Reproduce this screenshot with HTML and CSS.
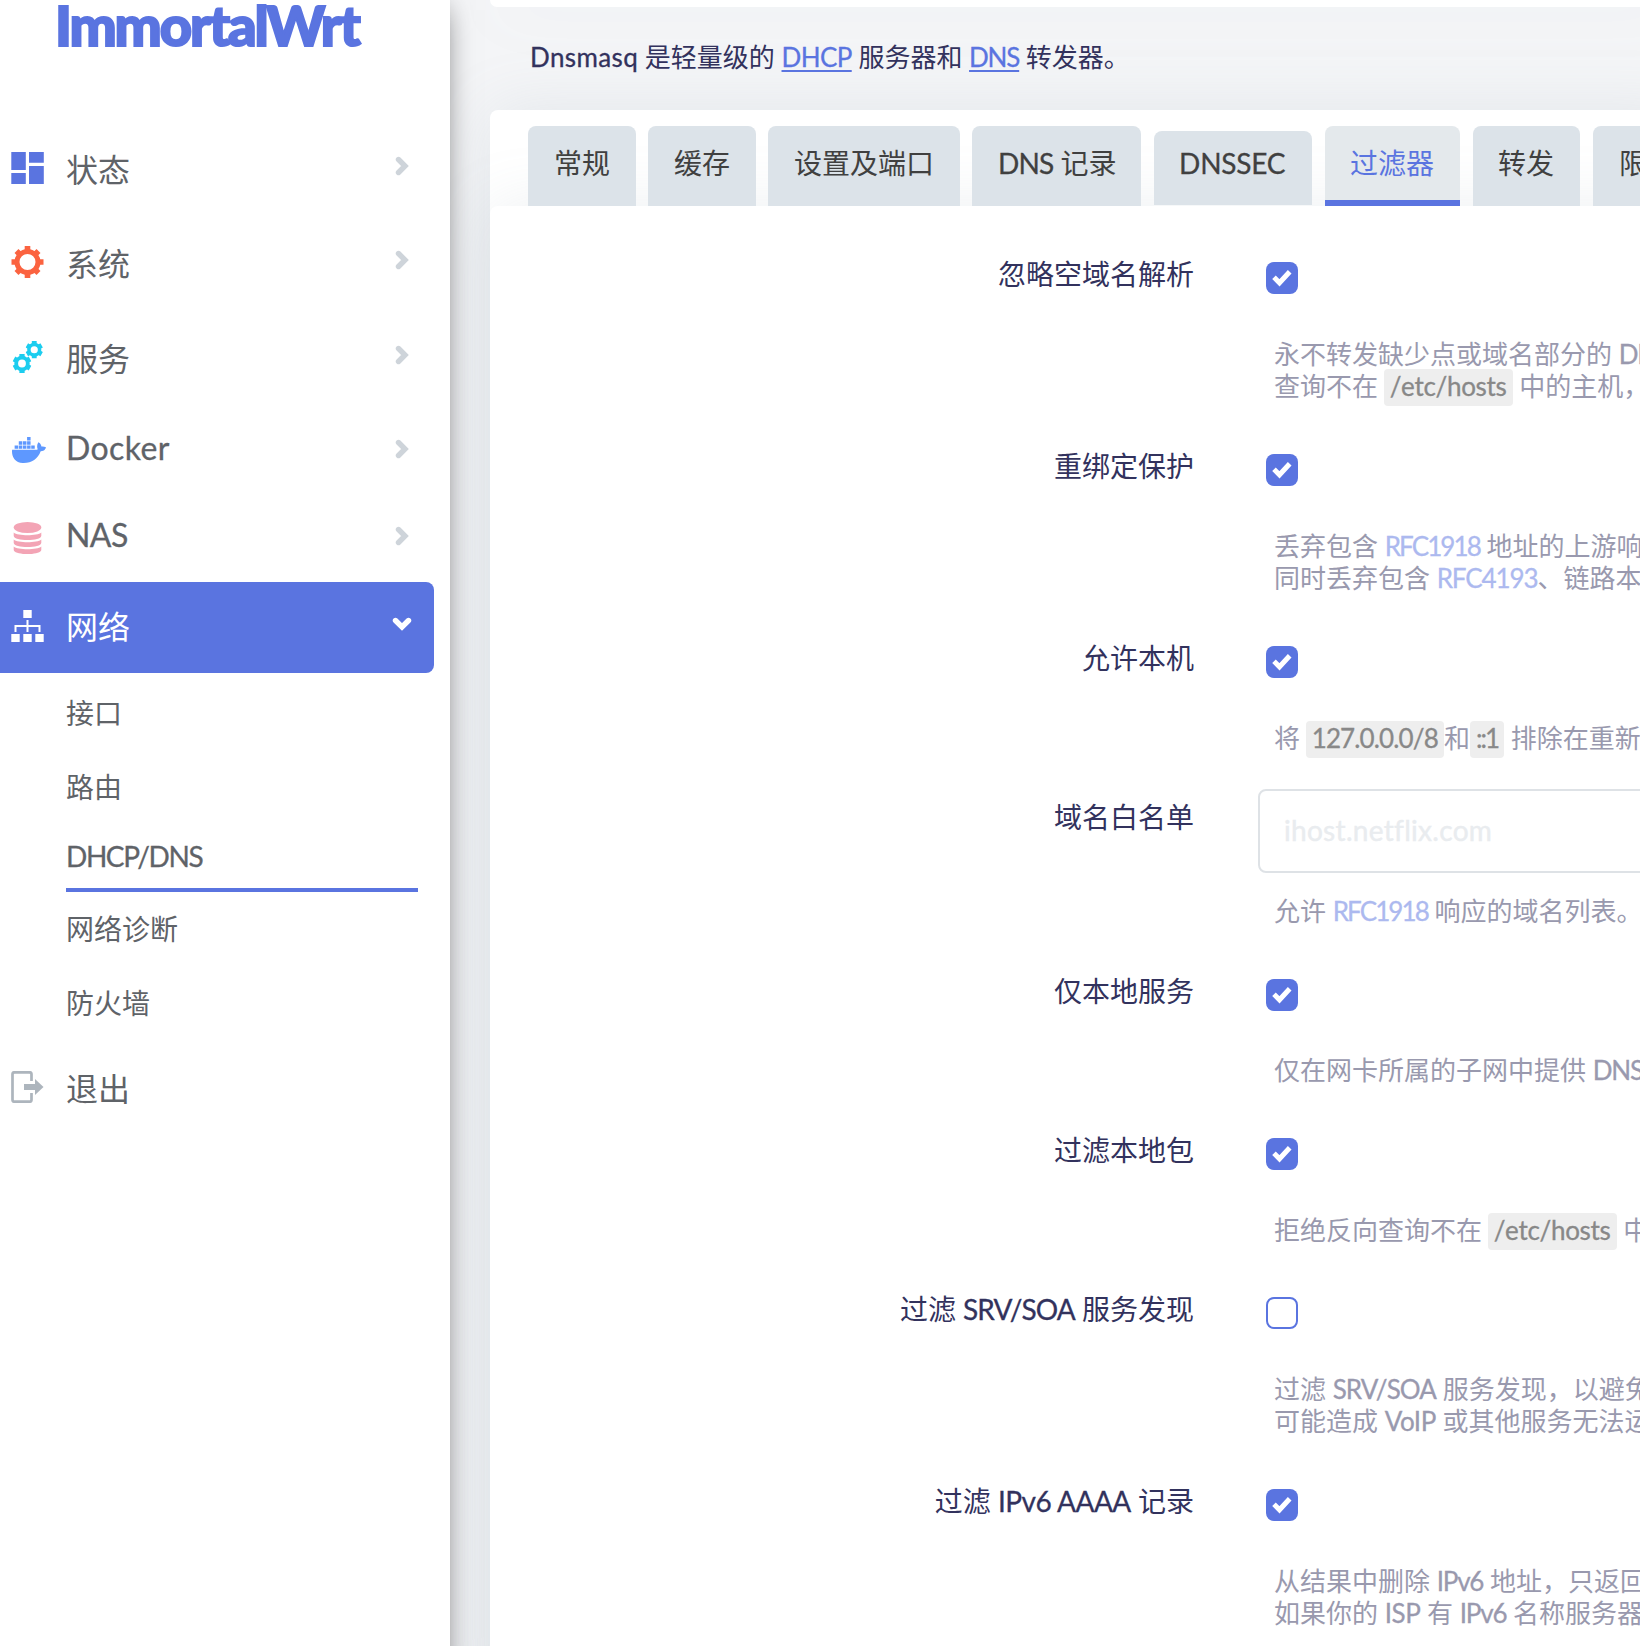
FILE: index.html
```html
<!DOCTYPE html>
<html lang="zh-CN">
<head>
<meta charset="utf-8">
<title>ImmortalWrt - DHCP/DNS</title>
<link rel="stylesheet" href="styles.css">
</head>
<body>
<svg class="defs" width="0" height="0" aria-hidden="true">
  <symbol id="chevron" viewBox="0 0 20 20"><path d="M6.500 3.500 13 10l-6.500 6.500" fill="none" stroke="currentColor" stroke-width="5.400" stroke-linecap="round"/></symbol>
  <symbol id="check" viewBox="0 0 32 32"><path d="M8 15.200l5.500 5.600L23.700 9.800" fill="none" stroke="#fff" stroke-width="5"/></symbol>
  <symbol id="cog6" viewBox="-9 -9 18 18">
    <circle r="5.500" fill="none" stroke="currentColor" stroke-width="3.600"/>
    <path d="M0-9v3.500M0 9V5.500M7.600-4.400 5-2.900M-7.600 4.400-5 2.900M-7.600-4.400-5-2.900M7.600 4.400 5 2.900" stroke="currentColor" stroke-width="5"/>
  </symbol>
</svg>
<div class="layout">
  <aside class="sidebar">
    <div class="brand">ImmortalWrt</div>
    <ul class="nav">
      <li class="nav-item">
        <svg class="icon blue" viewBox="0 0 33 32"><path d="M.300 0H14.800v18H.300zM18 0h14.800v10.800H18zM.300 21H14.800v11H.300zM18 14h14.800v18H18z" fill="currentColor"/></svg>
        <span class="nav-text">状态</span><svg class="chevron"><use href="#chevron"/></svg>
      </li>
      <li class="nav-item">
        <svg class="icon orange" viewBox="-16.500 -16 33 32"><circle r="10.500" fill="none" stroke="currentColor" stroke-width="5"/><path d="M0-16v5M0 16v-5M-16 0h5M16 0h-5M-11-11l4 4M11 11l-4-4M-11 11l4-4M11-11l-4 4" stroke="currentColor" stroke-width="5.600"/></svg>
        <span class="nav-text">系统</span><svg class="chevron"><use href="#chevron"/></svg>
      </li>
      <li class="nav-item">
        <svg class="icon cyan" viewBox="0 0 33 32"><use href="#cog6" x="1.500" y="13" width="19" height="19"/><use href="#cog6" x="14.500" y="0" width="17.500" height="17.500"/></svg>
        <span class="nav-text">服务</span><svg class="chevron"><use href="#chevron"/></svg>
      </li>
      <li class="nav-item latin">
        <svg class="icon docker" viewBox="0 32 640 448" preserveAspectRatio="none"><path fill="currentColor" d="M349.900 236.300h-66.100v-59.400h66.100v59.400zm0-204.300h-66.100v60.700h66.100V32zm78.200 144.800H362v59.400h66.100v-59.400zm-156.300-72.100h-66.100v60.100h66.100v-60.100zm78.100 0h-66.100v60.100h66.100v-60.100zm276.800 100c-14.400-9.700-47.600-13.200-73.100-8.400-3.300-24-16.700-44.900-41.100-63.700l-14-9.300-9.300 14c-18.400 27.800-23.400 73.600-3.700 103.800-8.700 4.700-25.800 11.100-48.400 10.700H2.400c-8.700 50.800 5.800 116.800 44 162.100 37.100 43.900 92.700 66.200 165.400 66.200 157.400 0 273.900-72.500 328.400-204.200 21.400.4 67.600.1 91.300-45.200 1.500-2.500 6.600-13.200 8.500-17.100l-13.300-8.900zm-511.100-27.900h-66v59.400h66.100v-59.400zm78.100 0h-66.100v59.400h66.100v-59.400zm78.100 0h-66.100v59.400h66.100v-59.400zm-78.100-72.100h-66.100v60.100h66.100v-60.100z"/></svg>
        <span class="nav-text en docker-name">Docker</span><svg class="chevron"><use href="#chevron"/></svg>
      </li>
      <li class="nav-item latin">
        <svg class="icon pink" viewBox="0 0 33 32"><g fill="currentColor"><ellipse cx="16.500" cy="5.500" rx="13.800" ry="5.500"/><path d="M2.700 10.500c4 3.600 23.600 3.600 27.600 0v3.200c0 5.800-27.600 5.800-27.600 0z"/><path d="M2.700 17.500c4 3.600 23.600 3.600 27.600 0v3.200c0 5.800-27.600 5.800-27.600 0z"/><path d="M2.700 24.500c4 3.600 23.600 3.600 27.600 0v3.200c0 5.800-27.600 5.800-27.600 0z"/></g></svg>
        <span class="nav-text en nas-name">NAS</span><svg class="chevron"><use href="#chevron"/></svg>
      </li>
      <li class="nav-item active">
        <svg class="icon" viewBox="0 0 33 32"><path d="M12.300 0h8.400v8h-8.400zM.300 24h8.400v8H.300zM12.300 24h8.400v8h-8.400zM24.300 24h8.400v8h-8.400z" fill="currentColor"/><path d="M16.500 10v12M4.500 22v-6h24v6" fill="none" stroke="currentColor" stroke-width="2"/></svg>
        <span class="nav-text">网络</span><svg class="chevron down"><use href="#chevron"/></svg>
      </li>
    </ul>
    <ul class="subnav">
      <li>接口</li>
      <li>路由</li>
      <li class="current en">DHCP/DNS</li>
      <li>网络诊断</li>
      <li>防火墙</li>
    </ul>
    <div class="nav-item logout">
      <svg class="icon grey" viewBox="0 0 33 32"><path d="M20.500 10V3.300q0-2-2-2h-15q-2 0-2 2v25.400q0 2 2 2h15q2 0 2-2V22" fill="none" stroke="currentColor" stroke-width="2.700"/><path d="M13 13h11V8l8.500 8L24 24v-5H13z" fill="currentColor"/></svg>
      <span class="nav-text">退出</span>
    </div>
  </aside>
  <main class="content">
    <div class="card-end"></div>
    <p class="intro"><span class="en wide">Dnsmasq</span> 是轻量级的 <a class="en dhcp">DHCP</a> 服务器和 <a class="en tight">DNS</a> 转发器。</p>
    <section class="panel">
      <ul class="tabs">
        <li>常规</li>
        <li>缓存</li>
        <li>设置及端口</li>
        <li class="dns"><span class="en srv">DNS</span> 记录</li>
        <li class="dnssec en">DNSSEC</li>
        <li class="selected">过滤器</li>
        <li class="forward">转发</li>
        <li>限制</li>
      </ul>
      <div class="form">
        <div class="row tall"><label>忽略空域名解析</label><div class="field"><span class="box on"><svg><use href="#check"/></svg></span><p class="desc">永不转发缺少点或域名部分的 <span class="en tight">DNS</span><br>查询不在 <code class="en">/etc/hosts</code> 中的主机，</p></div></div>
        <div class="row tall"><label>重绑定保护</label><div class="field"><span class="box on"><svg><use href="#check"/></svg></span><p class="desc">丢弃包含 <a class="en rfc1918">RFC1918</a> 地址的上游响应<br>同时丢弃包含 <a class="en rfc4193">RFC4193</a>、链路本地</p></div></div>
        <div class="row"><label>允许本机</label><div class="field"><span class="box on"><svg><use href="#check"/></svg></span><p class="desc">将 <code class="en ip">127.0.0.0/8</code>和<code class="en loop">::1</code> 排除在重新绑</p></div></div>
        <div class="row input-row"><label>域名白名单</label><div class="field"><input class="en" type="text" placeholder="ihost.netflix.com"><p class="desc">允许 <a class="en rfc1918">RFC1918</a> 响应的域名列表。</p></div></div>
        <div class="row"><label>仅本地服务</label><div class="field"><span class="box on"><svg><use href="#check"/></svg></span><p class="desc raised">仅在网卡所属的子网中提供 <span class="en tight">DNS</span></p></div></div>
        <div class="row"><label>过滤本地包</label><div class="field"><span class="box on"><svg><use href="#check"/></svg></span><p class="desc">拒绝反向查询不在 <code class="en">/etc/hosts</code> 中的</p></div></div>
        <div class="row tall"><label>过滤 <span class="en srv">SRV/SOA</span> 服务发现</label><div class="field"><span class="box"></span><p class="desc">过滤 <span class="en srv">SRV/SOA</span> 服务发现，以避免<br>可能造成 <span class="en voip">VoIP</span> 或其他服务无法运行</p></div></div>
        <div class="row tall"><label>过滤 <span class="en aaaa">IPv6 AAAA</span> 记录</label><div class="field"><span class="box on"><svg><use href="#check"/></svg></span><p class="desc">从结果中删除 <span class="en ipv6">IPv6</span> 地址，只返回<br>如果你的 <span class="en voip">ISP</span> 有 <span class="en ipv6">IPv6</span> 名称服务器</p></div></div>
      </div>
    </section>
  </main>
</div>
</body>
</html>
```
FILE: styles.css
```css
:root {
  --primary: #5a74e0;
  --card-shadow: 0 0 64px rgba(136, 152, 170, .15);
}
* { box-sizing: border-box; }
html, body { margin: 0; height: 1646px; overflow: hidden; }
body {
  background: #f4f5f7;
  color: #32325d;
  font: 28px/40px Lato, "Noto Sans CJK SC", sans-serif;
  white-space: nowrap;
}
ul { list-style: none; margin: 0; padding: 0; }
.defs { position: absolute; }
.layout { display: flex; width: 1640px; height: 1646px; overflow: hidden; }

/* Latin runs: a little heavier, with spacing tuned per word */
.en { -webkit-text-stroke: .3px currentColor; letter-spacing: -.4px; }
.wide { letter-spacing: .4px; }
.dhcp { letter-spacing: -.6px; }
.tight { letter-spacing: -1.2px; }
.srv { letter-spacing: -.9px; }
.aaaa { letter-spacing: -.5px; }
.ipv6 { letter-spacing: -1.2px; }
.voip { letter-spacing: -.4px; }
.rfc1918 { letter-spacing: -1.9px; }
.rfc4193 { letter-spacing: -1.1px; }
.docker-name { letter-spacing: .4px; }
.nas-name { letter-spacing: -.6px; }

.sidebar {
  flex: none;
  width: 450px;
  height: 1700px;
  background: #fff;
  color: #5f6368;
  box-shadow: 0 0 30px -10px rgba(0, 0, 0, .75);
  z-index: 2;
}
.brand {
  height: 124px;
  padding-left: 55px;
  color: var(--primary);
  font-size: 56px;
  font-weight: 900;
  line-height: 50px;
  letter-spacing: -2.1px;
  -webkit-text-stroke: 2px var(--primary);
}
.nav-item {
  display: flex;
  align-items: flex-start;
  width: 434px;
  height: 91px;
  margin-bottom: 3.3px;
  padding: 0 22px 0 11px;
  font-size: 32px;
  line-height: 91px;
}
.nav-item.latin { height: 84px; line-height: 82.5px; }
.nav-item.active {
  margin: 3.8px 0 3px;
  border-radius: 0 8px 8px 0;
  background: var(--primary);
  color: #fff;
  line-height: 90px;
}
.icon { flex: none; width: 33px; height: 32px; margin-top: 28px; }
.icon.docker { width: 34px; height: 26px; margin: 30px -2px 0 1px; color: #5e98ff; }
.blue { color: var(--primary); }
.orange { color: #fb6340; }
.cyan { color: #1ccdef; }
.pink { color: #f3a4b5; }
.grey { color: #adb5bd; }
.nav-text { flex: 1; margin-left: 22px; }
.chevron { width: 20px; height: 20px; margin-top: 32px; color: #ced4da; }
.active .chevron { color: #fff; }
.chevron.down { transform: rotate(90deg); }
.subnav { padding: 0 32px 0 66px; }
.subnav li { height: 74px; line-height: 74px; }
.subnav .current { height: 68px; border-bottom: 4px solid var(--primary); line-height: 65px; letter-spacing: -1.4px; }
.logout { margin-top: 3px; }

.content { flex: 1; min-width: 0; padding-left: 40px; }
.card-end { width: 1200px; height: 7px; border-radius: 0 0 8px 8px; background: #fff; box-shadow: var(--card-shadow); }
.intro { height: 103px; margin: 0; padding: 30px 0 0 40px; font-size: 26px; line-height: 40px; }
a { color: var(--primary); }
.intro a {
  text-decoration: underline 2px;
  text-underline-offset: 3px;
  text-decoration-skip-ink: none;
}
.panel { width: 1200px; height: 1600px; border-radius: 8px; background: #fff; box-shadow: var(--card-shadow); }
.tabs { display: flex; align-items: flex-end; gap: 12px; height: 96px; padding: 16px 0 0 38px; }
.tabs li {
  flex: none;
  height: 80px;
  padding: 0 26px;
  border-radius: 8px 8px 0 0;
  background: #dce3e9;
  color: #404040;
  line-height: 74px;
  position: relative;
  z-index: 1;
}
.tabs .dns { width: 169px; padding-right: 0; }
.tabs .dnssec { width: 158px; height: 74px; margin: 0 1px 1px; padding: 0 25px; line-height: 64px; letter-spacing: -.2px; }
.tabs .selected { width: 135px; margin-right: 1px; padding: 0 0 0 25px; border-bottom: 6px solid var(--primary); background: #e4e9ec; color: var(--primary); }
.tabs .forward { width: 107px; margin-right: 1px; padding: 0 0 0 25px; }

.form { height: 1504px; padding-top: 40px; border-radius: 8px; background: #fff; box-shadow: var(--card-shadow); }
.row { display: grid; grid-template-columns: 704px 1fr; column-gap: 64px; height: 159px; }
.row.tall { height: 192px; }
.row.input-row { height: 174px; }
.row label { padding-top: 8px; text-align: right; }
.box {
  display: block;
  width: 32px;
  height: 32px;
  margin: 16px 0 44px 8px;
  border: 2px solid var(--primary);
  border-radius: 8px;
}
.box.on { border: 0; background: var(--primary); }
.box svg { display: block; width: 32px; height: 32px; }
.desc { margin: 0 0 0 16px; color: #9999ae; font-size: 26px; line-height: 32px; }
.desc.raised { margin-top: -1px; }
.desc a { color: #acb9ef; }
code.en { margin-left: -1px; padding: 1px 6px 4px; border-radius: 4px; background: #eee; color: #888; font: inherit; letter-spacing: -.3px; }
code.ip { letter-spacing: -.86px; }
code.loop { margin-left: 0; padding-left: 6px; letter-spacing: -2px; }
input {
  display: block;
  width: 600px;
  height: 84px;
  margin-bottom: 22px;
  padding: 0 24px 3px;
  border: 2px solid #dee2e6;
  border-radius: 8px;
  background: #fff;
  font: inherit;
}
input.en { letter-spacing: .3px; }
input::placeholder { color: #e9ecef; opacity: 1; -webkit-text-stroke: .4px #e9ecef; }
```
